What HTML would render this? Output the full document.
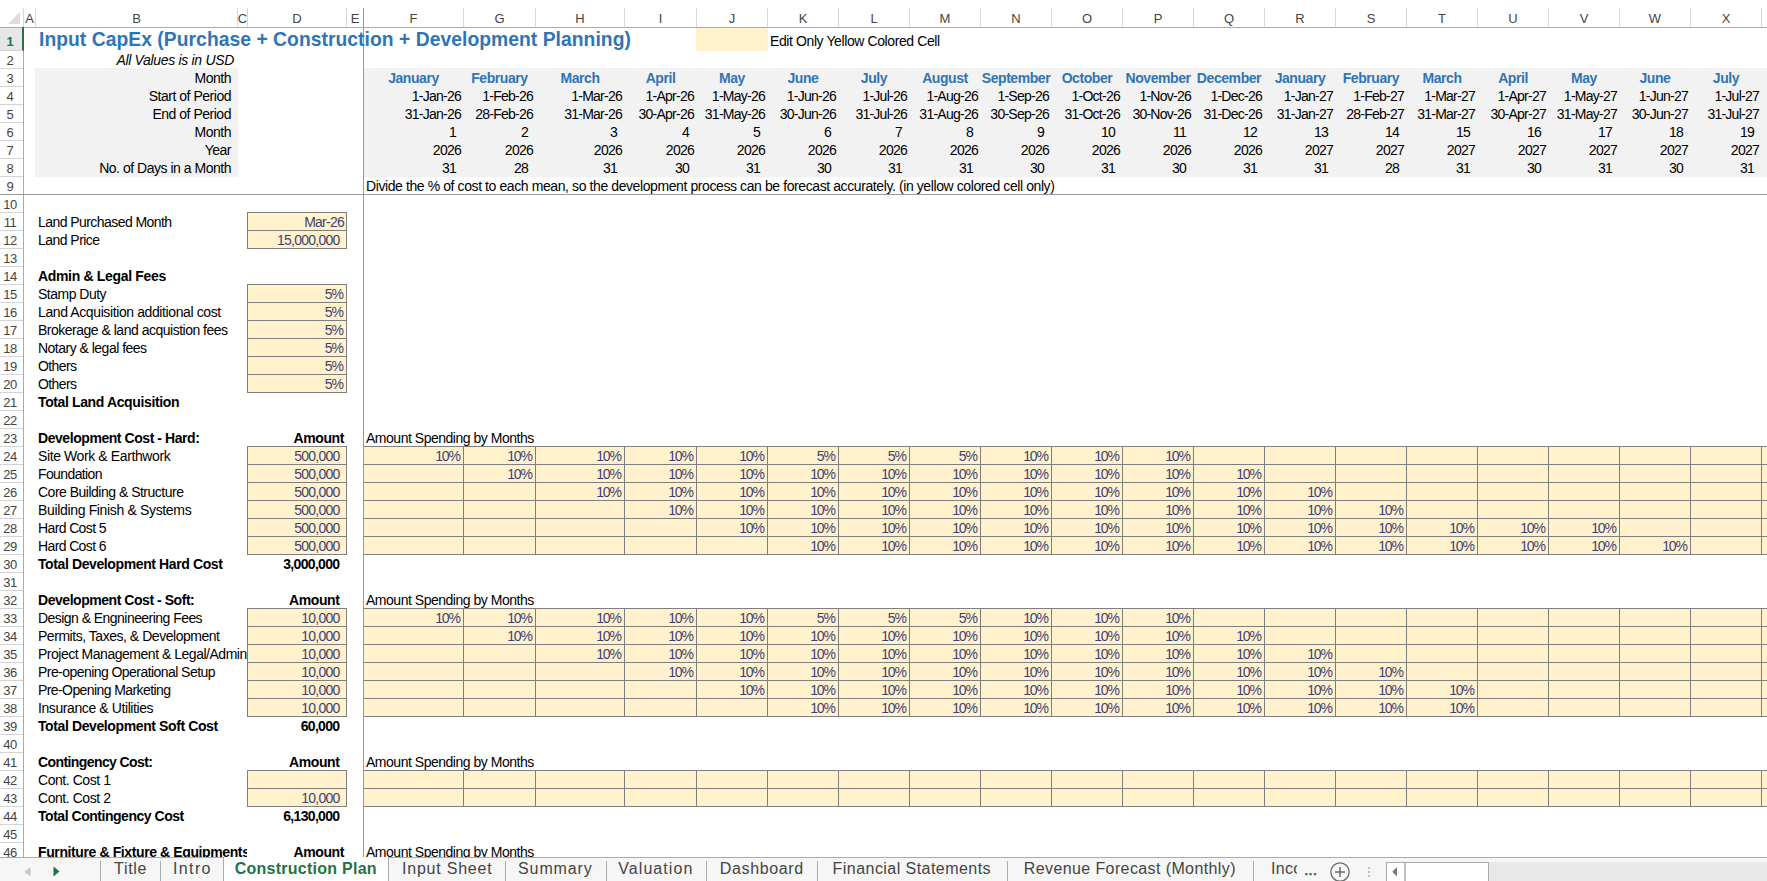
<!DOCTYPE html><html><head><meta charset="utf-8"><title>Construction Plan</title>
<style>
html,body{margin:0;padding:0;background:#fff;}
body{width:1767px;height:881px;overflow:hidden;position:relative;font-family:"Liberation Sans",sans-serif;font-size:14px;color:#000;}
.t{position:absolute;white-space:nowrap;letter-spacing:-0.480px;}
.n{letter-spacing:-0.750px;}
.p{letter-spacing:-1.050px;}
.b{font-weight:bold;letter-spacing:-0.390px;}
.i{font-style:italic;letter-spacing:-0.320px;}
.blue{color:#2e75b6;font-weight:bold;letter-spacing:-0.430px;}
.inp{color:#3f3f76;}
.ch{color:#444;font-size:13px;letter-spacing:0;}
.rh{color:#444;font-size:13px;letter-spacing:-0.45px;}
</style></head><body>
<div style="position:absolute;left:35px;top:68px;width:203px;height:109px;background:#f2f2f2;"></div>
<div style="position:absolute;left:364px;top:68px;width:1403px;height:109px;background:#f2f2f2;"></div>
<div style="position:absolute;left:696px;top:28px;width:72px;height:23px;background:#fff2cc;"></div>
<div style="position:absolute;left:247px;top:212px;width:100px;height:37px;background:#fff2cc;"></div>
<div style="position:absolute;left:247px;top:212px;width:100px;height:1px;background:#7f7f7f;"></div>
<div style="position:absolute;left:247px;top:230px;width:100px;height:1px;background:#7f7f7f;"></div>
<div style="position:absolute;left:247px;top:248px;width:100px;height:1px;background:#7f7f7f;"></div>
<div style="position:absolute;left:247px;top:212px;width:1px;height:37px;background:#7f7f7f;"></div>
<div style="position:absolute;left:346px;top:212px;width:1px;height:37px;background:#7f7f7f;"></div>
<div style="position:absolute;left:247px;top:284px;width:100px;height:109px;background:#fff2cc;"></div>
<div style="position:absolute;left:247px;top:284px;width:100px;height:1px;background:#7f7f7f;"></div>
<div style="position:absolute;left:247px;top:302px;width:100px;height:1px;background:#7f7f7f;"></div>
<div style="position:absolute;left:247px;top:320px;width:100px;height:1px;background:#7f7f7f;"></div>
<div style="position:absolute;left:247px;top:338px;width:100px;height:1px;background:#7f7f7f;"></div>
<div style="position:absolute;left:247px;top:356px;width:100px;height:1px;background:#7f7f7f;"></div>
<div style="position:absolute;left:247px;top:374px;width:100px;height:1px;background:#7f7f7f;"></div>
<div style="position:absolute;left:247px;top:392px;width:100px;height:1px;background:#7f7f7f;"></div>
<div style="position:absolute;left:247px;top:284px;width:1px;height:109px;background:#7f7f7f;"></div>
<div style="position:absolute;left:346px;top:284px;width:1px;height:109px;background:#7f7f7f;"></div>
<div style="position:absolute;left:247px;top:446px;width:100px;height:109px;background:#fff2cc;"></div>
<div style="position:absolute;left:247px;top:446px;width:100px;height:1px;background:#7f7f7f;"></div>
<div style="position:absolute;left:247px;top:464px;width:100px;height:1px;background:#7f7f7f;"></div>
<div style="position:absolute;left:247px;top:482px;width:100px;height:1px;background:#7f7f7f;"></div>
<div style="position:absolute;left:247px;top:500px;width:100px;height:1px;background:#7f7f7f;"></div>
<div style="position:absolute;left:247px;top:518px;width:100px;height:1px;background:#7f7f7f;"></div>
<div style="position:absolute;left:247px;top:536px;width:100px;height:1px;background:#7f7f7f;"></div>
<div style="position:absolute;left:247px;top:554px;width:100px;height:1px;background:#7f7f7f;"></div>
<div style="position:absolute;left:247px;top:446px;width:1px;height:109px;background:#7f7f7f;"></div>
<div style="position:absolute;left:346px;top:446px;width:1px;height:109px;background:#7f7f7f;"></div>
<div style="position:absolute;left:247px;top:608px;width:100px;height:109px;background:#fff2cc;"></div>
<div style="position:absolute;left:247px;top:608px;width:100px;height:1px;background:#7f7f7f;"></div>
<div style="position:absolute;left:247px;top:626px;width:100px;height:1px;background:#7f7f7f;"></div>
<div style="position:absolute;left:247px;top:644px;width:100px;height:1px;background:#7f7f7f;"></div>
<div style="position:absolute;left:247px;top:662px;width:100px;height:1px;background:#7f7f7f;"></div>
<div style="position:absolute;left:247px;top:680px;width:100px;height:1px;background:#7f7f7f;"></div>
<div style="position:absolute;left:247px;top:698px;width:100px;height:1px;background:#7f7f7f;"></div>
<div style="position:absolute;left:247px;top:716px;width:100px;height:1px;background:#7f7f7f;"></div>
<div style="position:absolute;left:247px;top:608px;width:1px;height:109px;background:#7f7f7f;"></div>
<div style="position:absolute;left:346px;top:608px;width:1px;height:109px;background:#7f7f7f;"></div>
<div style="position:absolute;left:247px;top:770px;width:100px;height:37px;background:#fff2cc;"></div>
<div style="position:absolute;left:247px;top:770px;width:100px;height:1px;background:#7f7f7f;"></div>
<div style="position:absolute;left:247px;top:788px;width:100px;height:1px;background:#7f7f7f;"></div>
<div style="position:absolute;left:247px;top:806px;width:100px;height:1px;background:#7f7f7f;"></div>
<div style="position:absolute;left:247px;top:770px;width:1px;height:37px;background:#7f7f7f;"></div>
<div style="position:absolute;left:346px;top:770px;width:1px;height:37px;background:#7f7f7f;"></div>
<div style="position:absolute;left:363px;top:446px;width:1404px;height:109px;background:#fff2cc;"></div>
<div style="position:absolute;left:363px;top:446px;width:1404px;height:1px;background:#7f7f7f;"></div>
<div style="position:absolute;left:363px;top:464px;width:1404px;height:1px;background:#7f7f7f;"></div>
<div style="position:absolute;left:363px;top:482px;width:1404px;height:1px;background:#7f7f7f;"></div>
<div style="position:absolute;left:363px;top:500px;width:1404px;height:1px;background:#7f7f7f;"></div>
<div style="position:absolute;left:363px;top:518px;width:1404px;height:1px;background:#7f7f7f;"></div>
<div style="position:absolute;left:363px;top:536px;width:1404px;height:1px;background:#7f7f7f;"></div>
<div style="position:absolute;left:363px;top:554px;width:1404px;height:1px;background:#7f7f7f;"></div>
<div style="position:absolute;left:463px;top:446px;width:1px;height:109px;background:#7f7f7f;"></div>
<div style="position:absolute;left:535px;top:446px;width:1px;height:109px;background:#7f7f7f;"></div>
<div style="position:absolute;left:624px;top:446px;width:1px;height:109px;background:#7f7f7f;"></div>
<div style="position:absolute;left:696px;top:446px;width:1px;height:109px;background:#7f7f7f;"></div>
<div style="position:absolute;left:767px;top:446px;width:1px;height:109px;background:#7f7f7f;"></div>
<div style="position:absolute;left:838px;top:446px;width:1px;height:109px;background:#7f7f7f;"></div>
<div style="position:absolute;left:909px;top:446px;width:1px;height:109px;background:#7f7f7f;"></div>
<div style="position:absolute;left:980px;top:446px;width:1px;height:109px;background:#7f7f7f;"></div>
<div style="position:absolute;left:1051px;top:446px;width:1px;height:109px;background:#7f7f7f;"></div>
<div style="position:absolute;left:1122px;top:446px;width:1px;height:109px;background:#7f7f7f;"></div>
<div style="position:absolute;left:1193px;top:446px;width:1px;height:109px;background:#7f7f7f;"></div>
<div style="position:absolute;left:1264px;top:446px;width:1px;height:109px;background:#7f7f7f;"></div>
<div style="position:absolute;left:1335px;top:446px;width:1px;height:109px;background:#7f7f7f;"></div>
<div style="position:absolute;left:1406px;top:446px;width:1px;height:109px;background:#7f7f7f;"></div>
<div style="position:absolute;left:1477px;top:446px;width:1px;height:109px;background:#7f7f7f;"></div>
<div style="position:absolute;left:1548px;top:446px;width:1px;height:109px;background:#7f7f7f;"></div>
<div style="position:absolute;left:1619px;top:446px;width:1px;height:109px;background:#7f7f7f;"></div>
<div style="position:absolute;left:1690px;top:446px;width:1px;height:109px;background:#7f7f7f;"></div>
<div style="position:absolute;left:1761px;top:446px;width:1px;height:109px;background:#7f7f7f;"></div>
<div style="position:absolute;left:363px;top:608px;width:1404px;height:109px;background:#fff2cc;"></div>
<div style="position:absolute;left:363px;top:608px;width:1404px;height:1px;background:#7f7f7f;"></div>
<div style="position:absolute;left:363px;top:626px;width:1404px;height:1px;background:#7f7f7f;"></div>
<div style="position:absolute;left:363px;top:644px;width:1404px;height:1px;background:#7f7f7f;"></div>
<div style="position:absolute;left:363px;top:662px;width:1404px;height:1px;background:#7f7f7f;"></div>
<div style="position:absolute;left:363px;top:680px;width:1404px;height:1px;background:#7f7f7f;"></div>
<div style="position:absolute;left:363px;top:698px;width:1404px;height:1px;background:#7f7f7f;"></div>
<div style="position:absolute;left:363px;top:716px;width:1404px;height:1px;background:#7f7f7f;"></div>
<div style="position:absolute;left:463px;top:608px;width:1px;height:109px;background:#7f7f7f;"></div>
<div style="position:absolute;left:535px;top:608px;width:1px;height:109px;background:#7f7f7f;"></div>
<div style="position:absolute;left:624px;top:608px;width:1px;height:109px;background:#7f7f7f;"></div>
<div style="position:absolute;left:696px;top:608px;width:1px;height:109px;background:#7f7f7f;"></div>
<div style="position:absolute;left:767px;top:608px;width:1px;height:109px;background:#7f7f7f;"></div>
<div style="position:absolute;left:838px;top:608px;width:1px;height:109px;background:#7f7f7f;"></div>
<div style="position:absolute;left:909px;top:608px;width:1px;height:109px;background:#7f7f7f;"></div>
<div style="position:absolute;left:980px;top:608px;width:1px;height:109px;background:#7f7f7f;"></div>
<div style="position:absolute;left:1051px;top:608px;width:1px;height:109px;background:#7f7f7f;"></div>
<div style="position:absolute;left:1122px;top:608px;width:1px;height:109px;background:#7f7f7f;"></div>
<div style="position:absolute;left:1193px;top:608px;width:1px;height:109px;background:#7f7f7f;"></div>
<div style="position:absolute;left:1264px;top:608px;width:1px;height:109px;background:#7f7f7f;"></div>
<div style="position:absolute;left:1335px;top:608px;width:1px;height:109px;background:#7f7f7f;"></div>
<div style="position:absolute;left:1406px;top:608px;width:1px;height:109px;background:#7f7f7f;"></div>
<div style="position:absolute;left:1477px;top:608px;width:1px;height:109px;background:#7f7f7f;"></div>
<div style="position:absolute;left:1548px;top:608px;width:1px;height:109px;background:#7f7f7f;"></div>
<div style="position:absolute;left:1619px;top:608px;width:1px;height:109px;background:#7f7f7f;"></div>
<div style="position:absolute;left:1690px;top:608px;width:1px;height:109px;background:#7f7f7f;"></div>
<div style="position:absolute;left:1761px;top:608px;width:1px;height:109px;background:#7f7f7f;"></div>
<div style="position:absolute;left:363px;top:770px;width:1404px;height:37px;background:#fff2cc;"></div>
<div style="position:absolute;left:363px;top:770px;width:1404px;height:1px;background:#7f7f7f;"></div>
<div style="position:absolute;left:363px;top:788px;width:1404px;height:1px;background:#7f7f7f;"></div>
<div style="position:absolute;left:363px;top:806px;width:1404px;height:1px;background:#7f7f7f;"></div>
<div style="position:absolute;left:463px;top:770px;width:1px;height:37px;background:#7f7f7f;"></div>
<div style="position:absolute;left:535px;top:770px;width:1px;height:37px;background:#7f7f7f;"></div>
<div style="position:absolute;left:624px;top:770px;width:1px;height:37px;background:#7f7f7f;"></div>
<div style="position:absolute;left:696px;top:770px;width:1px;height:37px;background:#7f7f7f;"></div>
<div style="position:absolute;left:767px;top:770px;width:1px;height:37px;background:#7f7f7f;"></div>
<div style="position:absolute;left:838px;top:770px;width:1px;height:37px;background:#7f7f7f;"></div>
<div style="position:absolute;left:909px;top:770px;width:1px;height:37px;background:#7f7f7f;"></div>
<div style="position:absolute;left:980px;top:770px;width:1px;height:37px;background:#7f7f7f;"></div>
<div style="position:absolute;left:1051px;top:770px;width:1px;height:37px;background:#7f7f7f;"></div>
<div style="position:absolute;left:1122px;top:770px;width:1px;height:37px;background:#7f7f7f;"></div>
<div style="position:absolute;left:1193px;top:770px;width:1px;height:37px;background:#7f7f7f;"></div>
<div style="position:absolute;left:1264px;top:770px;width:1px;height:37px;background:#7f7f7f;"></div>
<div style="position:absolute;left:1335px;top:770px;width:1px;height:37px;background:#7f7f7f;"></div>
<div style="position:absolute;left:1406px;top:770px;width:1px;height:37px;background:#7f7f7f;"></div>
<div style="position:absolute;left:1477px;top:770px;width:1px;height:37px;background:#7f7f7f;"></div>
<div style="position:absolute;left:1548px;top:770px;width:1px;height:37px;background:#7f7f7f;"></div>
<div style="position:absolute;left:1619px;top:770px;width:1px;height:37px;background:#7f7f7f;"></div>
<div style="position:absolute;left:1690px;top:770px;width:1px;height:37px;background:#7f7f7f;"></div>
<div style="position:absolute;left:1761px;top:770px;width:1px;height:37px;background:#7f7f7f;"></div>
<div style="position:absolute;left:0px;top:27px;width:1767px;height:1px;background:#ababab;"></div>
<div style="position:absolute;left:35px;top:8px;width:1px;height:19px;background:#d8d8d8;"></div>
<div style="position:absolute;left:237px;top:8px;width:1px;height:19px;background:#d8d8d8;"></div>
<div style="position:absolute;left:247px;top:8px;width:1px;height:19px;background:#d8d8d8;"></div>
<div style="position:absolute;left:346px;top:8px;width:1px;height:19px;background:#d8d8d8;"></div>
<div style="position:absolute;left:463px;top:8px;width:1px;height:19px;background:#d8d8d8;"></div>
<div style="position:absolute;left:535px;top:8px;width:1px;height:19px;background:#d8d8d8;"></div>
<div style="position:absolute;left:624px;top:8px;width:1px;height:19px;background:#d8d8d8;"></div>
<div style="position:absolute;left:696px;top:8px;width:1px;height:19px;background:#d8d8d8;"></div>
<div style="position:absolute;left:767px;top:8px;width:1px;height:19px;background:#d8d8d8;"></div>
<div style="position:absolute;left:838px;top:8px;width:1px;height:19px;background:#d8d8d8;"></div>
<div style="position:absolute;left:909px;top:8px;width:1px;height:19px;background:#d8d8d8;"></div>
<div style="position:absolute;left:980px;top:8px;width:1px;height:19px;background:#d8d8d8;"></div>
<div style="position:absolute;left:1051px;top:8px;width:1px;height:19px;background:#d8d8d8;"></div>
<div style="position:absolute;left:1122px;top:8px;width:1px;height:19px;background:#d8d8d8;"></div>
<div style="position:absolute;left:1193px;top:8px;width:1px;height:19px;background:#d8d8d8;"></div>
<div style="position:absolute;left:1264px;top:8px;width:1px;height:19px;background:#d8d8d8;"></div>
<div style="position:absolute;left:1335px;top:8px;width:1px;height:19px;background:#d8d8d8;"></div>
<div style="position:absolute;left:1406px;top:8px;width:1px;height:19px;background:#d8d8d8;"></div>
<div style="position:absolute;left:1477px;top:8px;width:1px;height:19px;background:#d8d8d8;"></div>
<div style="position:absolute;left:1548px;top:8px;width:1px;height:19px;background:#d8d8d8;"></div>
<div style="position:absolute;left:1619px;top:8px;width:1px;height:19px;background:#d8d8d8;"></div>
<div style="position:absolute;left:1690px;top:8px;width:1px;height:19px;background:#d8d8d8;"></div>
<div style="position:absolute;left:1761px;top:8px;width:1px;height:19px;background:#d8d8d8;"></div>
<div style="position:absolute;left:23px;top:8px;width:1px;height:19px;background:#d8d8d8;"></div>
<div class="t ch" style="left:-20.5px;width:100px;text-align:center;top:10px;height:17px;line-height:17px;">A</div>
<div class="t ch" style="left:86.5px;width:100px;text-align:center;top:10px;height:17px;line-height:17px;">B</div>
<div class="t ch" style="left:192.5px;width:100px;text-align:center;top:10px;height:17px;line-height:17px;">C</div>
<div class="t ch" style="left:247.0px;width:100px;text-align:center;top:10px;height:17px;line-height:17px;">D</div>
<div class="t ch" style="left:305.0px;width:100px;text-align:center;top:10px;height:17px;line-height:17px;">E</div>
<div class="t ch" style="left:363.5px;width:100px;text-align:center;top:10px;height:17px;line-height:17px;">F</div>
<div class="t ch" style="left:449.5px;width:100px;text-align:center;top:10px;height:17px;line-height:17px;">G</div>
<div class="t ch" style="left:530.0px;width:100px;text-align:center;top:10px;height:17px;line-height:17px;">H</div>
<div class="t ch" style="left:610.5px;width:100px;text-align:center;top:10px;height:17px;line-height:17px;">I</div>
<div class="t ch" style="left:682.0px;width:100px;text-align:center;top:10px;height:17px;line-height:17px;">J</div>
<div class="t ch" style="left:753.0px;width:100px;text-align:center;top:10px;height:17px;line-height:17px;">K</div>
<div class="t ch" style="left:824.0px;width:100px;text-align:center;top:10px;height:17px;line-height:17px;">L</div>
<div class="t ch" style="left:895.0px;width:100px;text-align:center;top:10px;height:17px;line-height:17px;">M</div>
<div class="t ch" style="left:966.0px;width:100px;text-align:center;top:10px;height:17px;line-height:17px;">N</div>
<div class="t ch" style="left:1037.0px;width:100px;text-align:center;top:10px;height:17px;line-height:17px;">O</div>
<div class="t ch" style="left:1108.0px;width:100px;text-align:center;top:10px;height:17px;line-height:17px;">P</div>
<div class="t ch" style="left:1179.0px;width:100px;text-align:center;top:10px;height:17px;line-height:17px;">Q</div>
<div class="t ch" style="left:1250.0px;width:100px;text-align:center;top:10px;height:17px;line-height:17px;">R</div>
<div class="t ch" style="left:1321.0px;width:100px;text-align:center;top:10px;height:17px;line-height:17px;">S</div>
<div class="t ch" style="left:1392.0px;width:100px;text-align:center;top:10px;height:17px;line-height:17px;">T</div>
<div class="t ch" style="left:1463.0px;width:100px;text-align:center;top:10px;height:17px;line-height:17px;">U</div>
<div class="t ch" style="left:1534.0px;width:100px;text-align:center;top:10px;height:17px;line-height:17px;">V</div>
<div class="t ch" style="left:1605.0px;width:100px;text-align:center;top:10px;height:17px;line-height:17px;">W</div>
<div class="t ch" style="left:1676.0px;width:100px;text-align:center;top:10px;height:17px;line-height:17px;">X</div>
<svg style="position:absolute;left:0;top:0" width="24" height="28"><polygon points="20,12 20,24 8,24" fill="#dcdcdc"/></svg>
<div style="position:absolute;left:23px;top:27px;width:1px;height:830px;background:#ababab;"></div>
<div style="position:absolute;left:0px;top:28px;width:22px;height:22px;background:#e6e6e6;"></div>
<div style="position:absolute;left:22px;top:27px;width:2px;height:24px;background:#217346;"></div>
<div style="position:absolute;left:0px;top:50px;width:23px;height:1px;background:#d4d4d4;"></div>
<div class="t rh" style="left:-1px;width:22px;text-align:center;top:29px;height:23px;line-height:23px;color:#217346;font-weight:bold;margin-top:1px;">1</div>
<div style="position:absolute;left:0px;top:68px;width:23px;height:1px;background:#d4d4d4;"></div>
<div class="t rh" style="left:-1px;width:22px;text-align:center;top:52px;height:18px;line-height:18px;">2</div>
<div style="position:absolute;left:0px;top:86px;width:23px;height:1px;background:#d4d4d4;"></div>
<div class="t rh" style="left:-1px;width:22px;text-align:center;top:70px;height:18px;line-height:18px;">3</div>
<div style="position:absolute;left:0px;top:104px;width:23px;height:1px;background:#d4d4d4;"></div>
<div class="t rh" style="left:-1px;width:22px;text-align:center;top:88px;height:18px;line-height:18px;">4</div>
<div style="position:absolute;left:0px;top:122px;width:23px;height:1px;background:#d4d4d4;"></div>
<div class="t rh" style="left:-1px;width:22px;text-align:center;top:106px;height:18px;line-height:18px;">5</div>
<div style="position:absolute;left:0px;top:140px;width:23px;height:1px;background:#d4d4d4;"></div>
<div class="t rh" style="left:-1px;width:22px;text-align:center;top:124px;height:18px;line-height:18px;">6</div>
<div style="position:absolute;left:0px;top:158px;width:23px;height:1px;background:#d4d4d4;"></div>
<div class="t rh" style="left:-1px;width:22px;text-align:center;top:142px;height:18px;line-height:18px;">7</div>
<div style="position:absolute;left:0px;top:176px;width:23px;height:1px;background:#d4d4d4;"></div>
<div class="t rh" style="left:-1px;width:22px;text-align:center;top:160px;height:18px;line-height:18px;">8</div>
<div style="position:absolute;left:0px;top:194px;width:23px;height:1px;background:#d4d4d4;"></div>
<div class="t rh" style="left:-1px;width:22px;text-align:center;top:178px;height:18px;line-height:18px;">9</div>
<div style="position:absolute;left:0px;top:212px;width:23px;height:1px;background:#d4d4d4;"></div>
<div class="t rh" style="left:-1px;width:22px;text-align:center;top:196px;height:18px;line-height:18px;">10</div>
<div style="position:absolute;left:0px;top:230px;width:23px;height:1px;background:#d4d4d4;"></div>
<div class="t rh" style="left:-1px;width:22px;text-align:center;top:214px;height:18px;line-height:18px;">11</div>
<div style="position:absolute;left:0px;top:248px;width:23px;height:1px;background:#d4d4d4;"></div>
<div class="t rh" style="left:-1px;width:22px;text-align:center;top:232px;height:18px;line-height:18px;">12</div>
<div style="position:absolute;left:0px;top:266px;width:23px;height:1px;background:#d4d4d4;"></div>
<div class="t rh" style="left:-1px;width:22px;text-align:center;top:250px;height:18px;line-height:18px;">13</div>
<div style="position:absolute;left:0px;top:284px;width:23px;height:1px;background:#d4d4d4;"></div>
<div class="t rh" style="left:-1px;width:22px;text-align:center;top:268px;height:18px;line-height:18px;">14</div>
<div style="position:absolute;left:0px;top:302px;width:23px;height:1px;background:#d4d4d4;"></div>
<div class="t rh" style="left:-1px;width:22px;text-align:center;top:286px;height:18px;line-height:18px;">15</div>
<div style="position:absolute;left:0px;top:320px;width:23px;height:1px;background:#d4d4d4;"></div>
<div class="t rh" style="left:-1px;width:22px;text-align:center;top:304px;height:18px;line-height:18px;">16</div>
<div style="position:absolute;left:0px;top:338px;width:23px;height:1px;background:#d4d4d4;"></div>
<div class="t rh" style="left:-1px;width:22px;text-align:center;top:322px;height:18px;line-height:18px;">17</div>
<div style="position:absolute;left:0px;top:356px;width:23px;height:1px;background:#d4d4d4;"></div>
<div class="t rh" style="left:-1px;width:22px;text-align:center;top:340px;height:18px;line-height:18px;">18</div>
<div style="position:absolute;left:0px;top:374px;width:23px;height:1px;background:#d4d4d4;"></div>
<div class="t rh" style="left:-1px;width:22px;text-align:center;top:358px;height:18px;line-height:18px;">19</div>
<div style="position:absolute;left:0px;top:392px;width:23px;height:1px;background:#d4d4d4;"></div>
<div class="t rh" style="left:-1px;width:22px;text-align:center;top:376px;height:18px;line-height:18px;">20</div>
<div style="position:absolute;left:0px;top:410px;width:23px;height:1px;background:#d4d4d4;"></div>
<div class="t rh" style="left:-1px;width:22px;text-align:center;top:394px;height:18px;line-height:18px;">21</div>
<div style="position:absolute;left:0px;top:428px;width:23px;height:1px;background:#d4d4d4;"></div>
<div class="t rh" style="left:-1px;width:22px;text-align:center;top:412px;height:18px;line-height:18px;">22</div>
<div style="position:absolute;left:0px;top:446px;width:23px;height:1px;background:#d4d4d4;"></div>
<div class="t rh" style="left:-1px;width:22px;text-align:center;top:430px;height:18px;line-height:18px;">23</div>
<div style="position:absolute;left:0px;top:464px;width:23px;height:1px;background:#d4d4d4;"></div>
<div class="t rh" style="left:-1px;width:22px;text-align:center;top:448px;height:18px;line-height:18px;">24</div>
<div style="position:absolute;left:0px;top:482px;width:23px;height:1px;background:#d4d4d4;"></div>
<div class="t rh" style="left:-1px;width:22px;text-align:center;top:466px;height:18px;line-height:18px;">25</div>
<div style="position:absolute;left:0px;top:500px;width:23px;height:1px;background:#d4d4d4;"></div>
<div class="t rh" style="left:-1px;width:22px;text-align:center;top:484px;height:18px;line-height:18px;">26</div>
<div style="position:absolute;left:0px;top:518px;width:23px;height:1px;background:#d4d4d4;"></div>
<div class="t rh" style="left:-1px;width:22px;text-align:center;top:502px;height:18px;line-height:18px;">27</div>
<div style="position:absolute;left:0px;top:536px;width:23px;height:1px;background:#d4d4d4;"></div>
<div class="t rh" style="left:-1px;width:22px;text-align:center;top:520px;height:18px;line-height:18px;">28</div>
<div style="position:absolute;left:0px;top:554px;width:23px;height:1px;background:#d4d4d4;"></div>
<div class="t rh" style="left:-1px;width:22px;text-align:center;top:538px;height:18px;line-height:18px;">29</div>
<div style="position:absolute;left:0px;top:572px;width:23px;height:1px;background:#d4d4d4;"></div>
<div class="t rh" style="left:-1px;width:22px;text-align:center;top:556px;height:18px;line-height:18px;">30</div>
<div style="position:absolute;left:0px;top:590px;width:23px;height:1px;background:#d4d4d4;"></div>
<div class="t rh" style="left:-1px;width:22px;text-align:center;top:574px;height:18px;line-height:18px;">31</div>
<div style="position:absolute;left:0px;top:608px;width:23px;height:1px;background:#d4d4d4;"></div>
<div class="t rh" style="left:-1px;width:22px;text-align:center;top:592px;height:18px;line-height:18px;">32</div>
<div style="position:absolute;left:0px;top:626px;width:23px;height:1px;background:#d4d4d4;"></div>
<div class="t rh" style="left:-1px;width:22px;text-align:center;top:610px;height:18px;line-height:18px;">33</div>
<div style="position:absolute;left:0px;top:644px;width:23px;height:1px;background:#d4d4d4;"></div>
<div class="t rh" style="left:-1px;width:22px;text-align:center;top:628px;height:18px;line-height:18px;">34</div>
<div style="position:absolute;left:0px;top:662px;width:23px;height:1px;background:#d4d4d4;"></div>
<div class="t rh" style="left:-1px;width:22px;text-align:center;top:646px;height:18px;line-height:18px;">35</div>
<div style="position:absolute;left:0px;top:680px;width:23px;height:1px;background:#d4d4d4;"></div>
<div class="t rh" style="left:-1px;width:22px;text-align:center;top:664px;height:18px;line-height:18px;">36</div>
<div style="position:absolute;left:0px;top:698px;width:23px;height:1px;background:#d4d4d4;"></div>
<div class="t rh" style="left:-1px;width:22px;text-align:center;top:682px;height:18px;line-height:18px;">37</div>
<div style="position:absolute;left:0px;top:716px;width:23px;height:1px;background:#d4d4d4;"></div>
<div class="t rh" style="left:-1px;width:22px;text-align:center;top:700px;height:18px;line-height:18px;">38</div>
<div style="position:absolute;left:0px;top:734px;width:23px;height:1px;background:#d4d4d4;"></div>
<div class="t rh" style="left:-1px;width:22px;text-align:center;top:718px;height:18px;line-height:18px;">39</div>
<div style="position:absolute;left:0px;top:752px;width:23px;height:1px;background:#d4d4d4;"></div>
<div class="t rh" style="left:-1px;width:22px;text-align:center;top:736px;height:18px;line-height:18px;">40</div>
<div style="position:absolute;left:0px;top:770px;width:23px;height:1px;background:#d4d4d4;"></div>
<div class="t rh" style="left:-1px;width:22px;text-align:center;top:754px;height:18px;line-height:18px;">41</div>
<div style="position:absolute;left:0px;top:788px;width:23px;height:1px;background:#d4d4d4;"></div>
<div class="t rh" style="left:-1px;width:22px;text-align:center;top:772px;height:18px;line-height:18px;">42</div>
<div style="position:absolute;left:0px;top:806px;width:23px;height:1px;background:#d4d4d4;"></div>
<div class="t rh" style="left:-1px;width:22px;text-align:center;top:790px;height:18px;line-height:18px;">43</div>
<div style="position:absolute;left:0px;top:824px;width:23px;height:1px;background:#d4d4d4;"></div>
<div class="t rh" style="left:-1px;width:22px;text-align:center;top:808px;height:18px;line-height:18px;">44</div>
<div style="position:absolute;left:0px;top:842px;width:23px;height:1px;background:#d4d4d4;"></div>
<div class="t rh" style="left:-1px;width:22px;text-align:center;top:826px;height:18px;line-height:18px;">45</div>
<div class="t rh" style="left:-1px;width:22px;text-align:center;top:844px;height:18px;line-height:18px;">46</div>
<div style="position:absolute;left:363px;top:8px;width:1px;height:849px;background:#9b9b9b;"></div>
<div style="position:absolute;left:0px;top:194px;width:1767px;height:1px;background:#9b9b9b;"></div>
<div class="t blue" style="top:28px;height:23px;line-height:23px;left:39px;font-size:19.3px;letter-spacing:0.045px;">Input CapEx (Purchase + Construction + Development Planning)</div>
<div class="t " style="top:30px;height:23px;line-height:23px;left:770px;letter-spacing:-0.40px;">Edit Only Yellow Colored Cell</div>
<div class="t i" style="top:51px;height:18px;line-height:18px;right:1533px;">All Values is in USD</div>
<div class="t " style="top:69px;height:18px;line-height:18px;right:1536px;">Month</div>
<div class="t " style="top:87px;height:18px;line-height:18px;right:1536px;">Start of Period</div>
<div class="t " style="top:105px;height:18px;line-height:18px;right:1536px;">End of Period</div>
<div class="t " style="top:123px;height:18px;line-height:18px;right:1536px;">Month</div>
<div class="t " style="top:141px;height:18px;line-height:18px;right:1536px;">Year</div>
<div class="t " style="top:159px;height:18px;line-height:18px;right:1536px;">No. of Days in a Month</div>
<div class="t blue" style="top:69px;height:18px;line-height:18px;left:263.5px;width:300px;text-align:center;">January</div>
<div class="t n" style="top:87px;height:18px;line-height:18px;right:1306px;">1-Jan-26</div>
<div class="t n" style="top:105px;height:18px;line-height:18px;right:1306px;">31-Jan-26</div>
<div class="t n" style="top:123px;height:18px;line-height:18px;right:1311px;">1</div>
<div class="t n" style="top:141px;height:18px;line-height:18px;right:1306px;">2026</div>
<div class="t n" style="top:159px;height:18px;line-height:18px;right:1311px;">31</div>
<div class="t blue" style="top:69px;height:18px;line-height:18px;left:349.5px;width:300px;text-align:center;">February</div>
<div class="t n" style="top:87px;height:18px;line-height:18px;right:1234px;">1-Feb-26</div>
<div class="t n" style="top:105px;height:18px;line-height:18px;right:1234px;">28-Feb-26</div>
<div class="t n" style="top:123px;height:18px;line-height:18px;right:1239px;">2</div>
<div class="t n" style="top:141px;height:18px;line-height:18px;right:1234px;">2026</div>
<div class="t n" style="top:159px;height:18px;line-height:18px;right:1239px;">28</div>
<div class="t blue" style="top:69px;height:18px;line-height:18px;left:430.0px;width:300px;text-align:center;">March</div>
<div class="t n" style="top:87px;height:18px;line-height:18px;right:1145px;">1-Mar-26</div>
<div class="t n" style="top:105px;height:18px;line-height:18px;right:1145px;">31-Mar-26</div>
<div class="t n" style="top:123px;height:18px;line-height:18px;right:1150px;">3</div>
<div class="t n" style="top:141px;height:18px;line-height:18px;right:1145px;">2026</div>
<div class="t n" style="top:159px;height:18px;line-height:18px;right:1150px;">31</div>
<div class="t blue" style="top:69px;height:18px;line-height:18px;left:510.5px;width:300px;text-align:center;">April</div>
<div class="t n" style="top:87px;height:18px;line-height:18px;right:1073px;">1-Apr-26</div>
<div class="t n" style="top:105px;height:18px;line-height:18px;right:1073px;">30-Apr-26</div>
<div class="t n" style="top:123px;height:18px;line-height:18px;right:1078px;">4</div>
<div class="t n" style="top:141px;height:18px;line-height:18px;right:1073px;">2026</div>
<div class="t n" style="top:159px;height:18px;line-height:18px;right:1078px;">30</div>
<div class="t blue" style="top:69px;height:18px;line-height:18px;left:582.0px;width:300px;text-align:center;">May</div>
<div class="t n" style="top:87px;height:18px;line-height:18px;right:1002px;">1-May-26</div>
<div class="t n" style="top:105px;height:18px;line-height:18px;right:1002px;">31-May-26</div>
<div class="t n" style="top:123px;height:18px;line-height:18px;right:1007px;">5</div>
<div class="t n" style="top:141px;height:18px;line-height:18px;right:1002px;">2026</div>
<div class="t n" style="top:159px;height:18px;line-height:18px;right:1007px;">31</div>
<div class="t blue" style="top:69px;height:18px;line-height:18px;left:653.0px;width:300px;text-align:center;">June</div>
<div class="t n" style="top:87px;height:18px;line-height:18px;right:931px;">1-Jun-26</div>
<div class="t n" style="top:105px;height:18px;line-height:18px;right:931px;">30-Jun-26</div>
<div class="t n" style="top:123px;height:18px;line-height:18px;right:936px;">6</div>
<div class="t n" style="top:141px;height:18px;line-height:18px;right:931px;">2026</div>
<div class="t n" style="top:159px;height:18px;line-height:18px;right:936px;">30</div>
<div class="t blue" style="top:69px;height:18px;line-height:18px;left:724.0px;width:300px;text-align:center;">July</div>
<div class="t n" style="top:87px;height:18px;line-height:18px;right:860px;">1-Jul-26</div>
<div class="t n" style="top:105px;height:18px;line-height:18px;right:860px;">31-Jul-26</div>
<div class="t n" style="top:123px;height:18px;line-height:18px;right:865px;">7</div>
<div class="t n" style="top:141px;height:18px;line-height:18px;right:860px;">2026</div>
<div class="t n" style="top:159px;height:18px;line-height:18px;right:865px;">31</div>
<div class="t blue" style="top:69px;height:18px;line-height:18px;left:795.0px;width:300px;text-align:center;">August</div>
<div class="t n" style="top:87px;height:18px;line-height:18px;right:789px;">1-Aug-26</div>
<div class="t n" style="top:105px;height:18px;line-height:18px;right:789px;">31-Aug-26</div>
<div class="t n" style="top:123px;height:18px;line-height:18px;right:794px;">8</div>
<div class="t n" style="top:141px;height:18px;line-height:18px;right:789px;">2026</div>
<div class="t n" style="top:159px;height:18px;line-height:18px;right:794px;">31</div>
<div class="t blue" style="top:69px;height:18px;line-height:18px;left:866.0px;width:300px;text-align:center;">September</div>
<div class="t n" style="top:87px;height:18px;line-height:18px;right:718px;">1-Sep-26</div>
<div class="t n" style="top:105px;height:18px;line-height:18px;right:718px;">30-Sep-26</div>
<div class="t n" style="top:123px;height:18px;line-height:18px;right:723px;">9</div>
<div class="t n" style="top:141px;height:18px;line-height:18px;right:718px;">2026</div>
<div class="t n" style="top:159px;height:18px;line-height:18px;right:723px;">30</div>
<div class="t blue" style="top:69px;height:18px;line-height:18px;left:937.0px;width:300px;text-align:center;">October</div>
<div class="t n" style="top:87px;height:18px;line-height:18px;right:647px;">1-Oct-26</div>
<div class="t n" style="top:105px;height:18px;line-height:18px;right:647px;">31-Oct-26</div>
<div class="t n" style="top:123px;height:18px;line-height:18px;right:652px;">10</div>
<div class="t n" style="top:141px;height:18px;line-height:18px;right:647px;">2026</div>
<div class="t n" style="top:159px;height:18px;line-height:18px;right:652px;">31</div>
<div class="t blue" style="top:69px;height:18px;line-height:18px;left:1008.0px;width:300px;text-align:center;">November</div>
<div class="t n" style="top:87px;height:18px;line-height:18px;right:576px;">1-Nov-26</div>
<div class="t n" style="top:105px;height:18px;line-height:18px;right:576px;">30-Nov-26</div>
<div class="t n" style="top:123px;height:18px;line-height:18px;right:581px;">11</div>
<div class="t n" style="top:141px;height:18px;line-height:18px;right:576px;">2026</div>
<div class="t n" style="top:159px;height:18px;line-height:18px;right:581px;">30</div>
<div class="t blue" style="top:69px;height:18px;line-height:18px;left:1079.0px;width:300px;text-align:center;">December</div>
<div class="t n" style="top:87px;height:18px;line-height:18px;right:505px;">1-Dec-26</div>
<div class="t n" style="top:105px;height:18px;line-height:18px;right:505px;">31-Dec-26</div>
<div class="t n" style="top:123px;height:18px;line-height:18px;right:510px;">12</div>
<div class="t n" style="top:141px;height:18px;line-height:18px;right:505px;">2026</div>
<div class="t n" style="top:159px;height:18px;line-height:18px;right:510px;">31</div>
<div class="t blue" style="top:69px;height:18px;line-height:18px;left:1150.0px;width:300px;text-align:center;">January</div>
<div class="t n" style="top:87px;height:18px;line-height:18px;right:434px;">1-Jan-27</div>
<div class="t n" style="top:105px;height:18px;line-height:18px;right:434px;">31-Jan-27</div>
<div class="t n" style="top:123px;height:18px;line-height:18px;right:439px;">13</div>
<div class="t n" style="top:141px;height:18px;line-height:18px;right:434px;">2027</div>
<div class="t n" style="top:159px;height:18px;line-height:18px;right:439px;">31</div>
<div class="t blue" style="top:69px;height:18px;line-height:18px;left:1221.0px;width:300px;text-align:center;">February</div>
<div class="t n" style="top:87px;height:18px;line-height:18px;right:363px;">1-Feb-27</div>
<div class="t n" style="top:105px;height:18px;line-height:18px;right:363px;">28-Feb-27</div>
<div class="t n" style="top:123px;height:18px;line-height:18px;right:368px;">14</div>
<div class="t n" style="top:141px;height:18px;line-height:18px;right:363px;">2027</div>
<div class="t n" style="top:159px;height:18px;line-height:18px;right:368px;">28</div>
<div class="t blue" style="top:69px;height:18px;line-height:18px;left:1292.0px;width:300px;text-align:center;">March</div>
<div class="t n" style="top:87px;height:18px;line-height:18px;right:292px;">1-Mar-27</div>
<div class="t n" style="top:105px;height:18px;line-height:18px;right:292px;">31-Mar-27</div>
<div class="t n" style="top:123px;height:18px;line-height:18px;right:297px;">15</div>
<div class="t n" style="top:141px;height:18px;line-height:18px;right:292px;">2027</div>
<div class="t n" style="top:159px;height:18px;line-height:18px;right:297px;">31</div>
<div class="t blue" style="top:69px;height:18px;line-height:18px;left:1363.0px;width:300px;text-align:center;">April</div>
<div class="t n" style="top:87px;height:18px;line-height:18px;right:221px;">1-Apr-27</div>
<div class="t n" style="top:105px;height:18px;line-height:18px;right:221px;">30-Apr-27</div>
<div class="t n" style="top:123px;height:18px;line-height:18px;right:226px;">16</div>
<div class="t n" style="top:141px;height:18px;line-height:18px;right:221px;">2027</div>
<div class="t n" style="top:159px;height:18px;line-height:18px;right:226px;">30</div>
<div class="t blue" style="top:69px;height:18px;line-height:18px;left:1434.0px;width:300px;text-align:center;">May</div>
<div class="t n" style="top:87px;height:18px;line-height:18px;right:150px;">1-May-27</div>
<div class="t n" style="top:105px;height:18px;line-height:18px;right:150px;">31-May-27</div>
<div class="t n" style="top:123px;height:18px;line-height:18px;right:155px;">17</div>
<div class="t n" style="top:141px;height:18px;line-height:18px;right:150px;">2027</div>
<div class="t n" style="top:159px;height:18px;line-height:18px;right:155px;">31</div>
<div class="t blue" style="top:69px;height:18px;line-height:18px;left:1505.0px;width:300px;text-align:center;">June</div>
<div class="t n" style="top:87px;height:18px;line-height:18px;right:79px;">1-Jun-27</div>
<div class="t n" style="top:105px;height:18px;line-height:18px;right:79px;">30-Jun-27</div>
<div class="t n" style="top:123px;height:18px;line-height:18px;right:84px;">18</div>
<div class="t n" style="top:141px;height:18px;line-height:18px;right:79px;">2027</div>
<div class="t n" style="top:159px;height:18px;line-height:18px;right:84px;">30</div>
<div class="t blue" style="top:69px;height:18px;line-height:18px;left:1576.0px;width:300px;text-align:center;">July</div>
<div class="t n" style="top:87px;height:18px;line-height:18px;right:8px;">1-Jul-27</div>
<div class="t n" style="top:105px;height:18px;line-height:18px;right:8px;">31-Jul-27</div>
<div class="t n" style="top:123px;height:18px;line-height:18px;right:13px;">19</div>
<div class="t n" style="top:141px;height:18px;line-height:18px;right:8px;">2027</div>
<div class="t n" style="top:159px;height:18px;line-height:18px;right:13px;">31</div>
<div class="t " style="top:177px;height:18px;line-height:18px;left:366px;letter-spacing:-0.405px;">Divide the % of cost to each mean, so the development process can be forecast accurately. (in yellow colored cell only)</div>
<div class="t " style="top:213px;height:18px;line-height:18px;left:38px;letter-spacing:-0.559px;">Land Purchased Month</div>
<div class="t inp n" style="top:213px;height:18px;line-height:18px;right:1423px;">Mar-26</div>
<div class="t " style="top:231px;height:18px;line-height:18px;left:38px;letter-spacing:-0.536px;">Land Price</div>
<div class="t inp n" style="top:231px;height:18px;line-height:18px;right:1427.5px;">15,000,000</div>
<div class="t b" style="top:267px;height:18px;line-height:18px;left:38px;letter-spacing:-0.331px;">Admin &amp; Legal Fees</div>
<div class="t " style="top:285px;height:18px;line-height:18px;left:38px;letter-spacing:-0.502px;">Stamp Duty</div>
<div class="t inp n p" style="top:285px;height:18px;line-height:18px;right:1424px;">5%</div>
<div class="t " style="top:303px;height:18px;line-height:18px;left:38px;letter-spacing:-0.393px;">Land Acquisition additional cost</div>
<div class="t inp n p" style="top:303px;height:18px;line-height:18px;right:1424px;">5%</div>
<div class="t " style="top:321px;height:18px;line-height:18px;left:38px;letter-spacing:-0.496px;">Brokerage &amp; land acquistion fees</div>
<div class="t inp n p" style="top:321px;height:18px;line-height:18px;right:1424px;">5%</div>
<div class="t " style="top:339px;height:18px;line-height:18px;left:38px;letter-spacing:-0.513px;">Notary &amp; legal fees</div>
<div class="t inp n p" style="top:339px;height:18px;line-height:18px;right:1424px;">5%</div>
<div class="t " style="top:357px;height:18px;line-height:18px;left:38px;letter-spacing:-0.6px;">Others</div>
<div class="t inp n p" style="top:357px;height:18px;line-height:18px;right:1424px;">5%</div>
<div class="t " style="top:375px;height:18px;line-height:18px;left:38px;letter-spacing:-0.6px;">Others</div>
<div class="t inp n p" style="top:375px;height:18px;line-height:18px;right:1424px;">5%</div>
<div class="t b" style="top:393px;height:18px;line-height:18px;left:38px;letter-spacing:-0.376px;">Total Land Acquisition</div>
<div class="t b" style="top:429px;height:18px;line-height:18px;left:38px;letter-spacing:-0.438px;">Development Cost - Hard:</div>
<div class="t b" style="top:429px;height:18px;line-height:18px;right:1423px;">Amount</div>
<div class="t " style="top:429px;height:18px;line-height:18px;left:366px;">Amount Spending by Months</div>
<div class="t" style="left:38px;width:209px;overflow:hidden;top:447px;height:18px;line-height:18px;letter-spacing:-0.395px;">Site Work &amp; Earthwork</div>
<div class="t inp n" style="top:447px;height:18px;line-height:18px;right:1427.5px;">500,000</div>
<div class="t inp n p" style="top:447px;height:18px;line-height:18px;right:1307px;">10%</div>
<div class="t inp n p" style="top:447px;height:18px;line-height:18px;right:1235px;">10%</div>
<div class="t inp n p" style="top:447px;height:18px;line-height:18px;right:1146px;">10%</div>
<div class="t inp n p" style="top:447px;height:18px;line-height:18px;right:1074px;">10%</div>
<div class="t inp n p" style="top:447px;height:18px;line-height:18px;right:1003px;">10%</div>
<div class="t inp n p" style="top:447px;height:18px;line-height:18px;right:932px;">5%</div>
<div class="t inp n p" style="top:447px;height:18px;line-height:18px;right:861px;">5%</div>
<div class="t inp n p" style="top:447px;height:18px;line-height:18px;right:790px;">5%</div>
<div class="t inp n p" style="top:447px;height:18px;line-height:18px;right:719px;">10%</div>
<div class="t inp n p" style="top:447px;height:18px;line-height:18px;right:648px;">10%</div>
<div class="t inp n p" style="top:447px;height:18px;line-height:18px;right:577px;">10%</div>
<div class="t" style="left:38px;width:209px;overflow:hidden;top:465px;height:18px;line-height:18px;letter-spacing:-0.613px;">Foundation</div>
<div class="t inp n" style="top:465px;height:18px;line-height:18px;right:1427.5px;">500,000</div>
<div class="t inp n p" style="top:465px;height:18px;line-height:18px;right:1235px;">10%</div>
<div class="t inp n p" style="top:465px;height:18px;line-height:18px;right:1146px;">10%</div>
<div class="t inp n p" style="top:465px;height:18px;line-height:18px;right:1074px;">10%</div>
<div class="t inp n p" style="top:465px;height:18px;line-height:18px;right:1003px;">10%</div>
<div class="t inp n p" style="top:465px;height:18px;line-height:18px;right:932px;">10%</div>
<div class="t inp n p" style="top:465px;height:18px;line-height:18px;right:861px;">10%</div>
<div class="t inp n p" style="top:465px;height:18px;line-height:18px;right:790px;">10%</div>
<div class="t inp n p" style="top:465px;height:18px;line-height:18px;right:719px;">10%</div>
<div class="t inp n p" style="top:465px;height:18px;line-height:18px;right:648px;">10%</div>
<div class="t inp n p" style="top:465px;height:18px;line-height:18px;right:577px;">10%</div>
<div class="t inp n p" style="top:465px;height:18px;line-height:18px;right:506px;">10%</div>
<div class="t" style="left:38px;width:209px;overflow:hidden;top:483px;height:18px;line-height:18px;letter-spacing:-0.501px;">Core Building &amp; Structure</div>
<div class="t inp n" style="top:483px;height:18px;line-height:18px;right:1427.5px;">500,000</div>
<div class="t inp n p" style="top:483px;height:18px;line-height:18px;right:1146px;">10%</div>
<div class="t inp n p" style="top:483px;height:18px;line-height:18px;right:1074px;">10%</div>
<div class="t inp n p" style="top:483px;height:18px;line-height:18px;right:1003px;">10%</div>
<div class="t inp n p" style="top:483px;height:18px;line-height:18px;right:932px;">10%</div>
<div class="t inp n p" style="top:483px;height:18px;line-height:18px;right:861px;">10%</div>
<div class="t inp n p" style="top:483px;height:18px;line-height:18px;right:790px;">10%</div>
<div class="t inp n p" style="top:483px;height:18px;line-height:18px;right:719px;">10%</div>
<div class="t inp n p" style="top:483px;height:18px;line-height:18px;right:648px;">10%</div>
<div class="t inp n p" style="top:483px;height:18px;line-height:18px;right:577px;">10%</div>
<div class="t inp n p" style="top:483px;height:18px;line-height:18px;right:506px;">10%</div>
<div class="t inp n p" style="top:483px;height:18px;line-height:18px;right:435px;">10%</div>
<div class="t" style="left:38px;width:209px;overflow:hidden;top:501px;height:18px;line-height:18px;letter-spacing:-0.342px;">Building Finish &amp; Systems</div>
<div class="t inp n" style="top:501px;height:18px;line-height:18px;right:1427.5px;">500,000</div>
<div class="t inp n p" style="top:501px;height:18px;line-height:18px;right:1074px;">10%</div>
<div class="t inp n p" style="top:501px;height:18px;line-height:18px;right:1003px;">10%</div>
<div class="t inp n p" style="top:501px;height:18px;line-height:18px;right:932px;">10%</div>
<div class="t inp n p" style="top:501px;height:18px;line-height:18px;right:861px;">10%</div>
<div class="t inp n p" style="top:501px;height:18px;line-height:18px;right:790px;">10%</div>
<div class="t inp n p" style="top:501px;height:18px;line-height:18px;right:719px;">10%</div>
<div class="t inp n p" style="top:501px;height:18px;line-height:18px;right:648px;">10%</div>
<div class="t inp n p" style="top:501px;height:18px;line-height:18px;right:577px;">10%</div>
<div class="t inp n p" style="top:501px;height:18px;line-height:18px;right:506px;">10%</div>
<div class="t inp n p" style="top:501px;height:18px;line-height:18px;right:435px;">10%</div>
<div class="t inp n p" style="top:501px;height:18px;line-height:18px;right:364px;">10%</div>
<div class="t" style="left:38px;width:209px;overflow:hidden;top:519px;height:18px;line-height:18px;letter-spacing:-0.62px;">Hard Cost 5</div>
<div class="t inp n" style="top:519px;height:18px;line-height:18px;right:1427.5px;">500,000</div>
<div class="t inp n p" style="top:519px;height:18px;line-height:18px;right:1003px;">10%</div>
<div class="t inp n p" style="top:519px;height:18px;line-height:18px;right:932px;">10%</div>
<div class="t inp n p" style="top:519px;height:18px;line-height:18px;right:861px;">10%</div>
<div class="t inp n p" style="top:519px;height:18px;line-height:18px;right:790px;">10%</div>
<div class="t inp n p" style="top:519px;height:18px;line-height:18px;right:719px;">10%</div>
<div class="t inp n p" style="top:519px;height:18px;line-height:18px;right:648px;">10%</div>
<div class="t inp n p" style="top:519px;height:18px;line-height:18px;right:577px;">10%</div>
<div class="t inp n p" style="top:519px;height:18px;line-height:18px;right:506px;">10%</div>
<div class="t inp n p" style="top:519px;height:18px;line-height:18px;right:435px;">10%</div>
<div class="t inp n p" style="top:519px;height:18px;line-height:18px;right:364px;">10%</div>
<div class="t inp n p" style="top:519px;height:18px;line-height:18px;right:293px;">10%</div>
<div class="t inp n p" style="top:519px;height:18px;line-height:18px;right:222px;">10%</div>
<div class="t inp n p" style="top:519px;height:18px;line-height:18px;right:151px;">10%</div>
<div class="t" style="left:38px;width:209px;overflow:hidden;top:537px;height:18px;line-height:18px;letter-spacing:-0.62px;">Hard Cost 6</div>
<div class="t inp n" style="top:537px;height:18px;line-height:18px;right:1427.5px;">500,000</div>
<div class="t inp n p" style="top:537px;height:18px;line-height:18px;right:932px;">10%</div>
<div class="t inp n p" style="top:537px;height:18px;line-height:18px;right:861px;">10%</div>
<div class="t inp n p" style="top:537px;height:18px;line-height:18px;right:790px;">10%</div>
<div class="t inp n p" style="top:537px;height:18px;line-height:18px;right:719px;">10%</div>
<div class="t inp n p" style="top:537px;height:18px;line-height:18px;right:648px;">10%</div>
<div class="t inp n p" style="top:537px;height:18px;line-height:18px;right:577px;">10%</div>
<div class="t inp n p" style="top:537px;height:18px;line-height:18px;right:506px;">10%</div>
<div class="t inp n p" style="top:537px;height:18px;line-height:18px;right:435px;">10%</div>
<div class="t inp n p" style="top:537px;height:18px;line-height:18px;right:364px;">10%</div>
<div class="t inp n p" style="top:537px;height:18px;line-height:18px;right:293px;">10%</div>
<div class="t inp n p" style="top:537px;height:18px;line-height:18px;right:222px;">10%</div>
<div class="t inp n p" style="top:537px;height:18px;line-height:18px;right:151px;">10%</div>
<div class="t inp n p" style="top:537px;height:18px;line-height:18px;right:80px;">10%</div>
<div class="t b" style="top:555px;height:18px;line-height:18px;left:38px;letter-spacing:-0.39px;">Total Development Hard Cost</div>
<div class="t b" style="top:555px;height:18px;line-height:18px;right:1427.5px;letter-spacing:-0.66px;">3,000,000</div>
<div class="t b" style="top:591px;height:18px;line-height:18px;left:38px;letter-spacing:-0.455px;">Development Cost - Soft:</div>
<div class="t b" style="top:591px;height:18px;line-height:18px;right:1427.5px;">Amount</div>
<div class="t " style="top:591px;height:18px;line-height:18px;left:366px;">Amount Spending by Months</div>
<div class="t" style="left:38px;width:209px;overflow:hidden;top:609px;height:18px;line-height:18px;letter-spacing:-0.544px;">Design &amp; Engnineering Fees</div>
<div class="t inp n" style="top:609px;height:18px;line-height:18px;right:1427.5px;">10,000</div>
<div class="t inp n p" style="top:609px;height:18px;line-height:18px;right:1307px;">10%</div>
<div class="t inp n p" style="top:609px;height:18px;line-height:18px;right:1235px;">10%</div>
<div class="t inp n p" style="top:609px;height:18px;line-height:18px;right:1146px;">10%</div>
<div class="t inp n p" style="top:609px;height:18px;line-height:18px;right:1074px;">10%</div>
<div class="t inp n p" style="top:609px;height:18px;line-height:18px;right:1003px;">10%</div>
<div class="t inp n p" style="top:609px;height:18px;line-height:18px;right:932px;">5%</div>
<div class="t inp n p" style="top:609px;height:18px;line-height:18px;right:861px;">5%</div>
<div class="t inp n p" style="top:609px;height:18px;line-height:18px;right:790px;">5%</div>
<div class="t inp n p" style="top:609px;height:18px;line-height:18px;right:719px;">10%</div>
<div class="t inp n p" style="top:609px;height:18px;line-height:18px;right:648px;">10%</div>
<div class="t inp n p" style="top:609px;height:18px;line-height:18px;right:577px;">10%</div>
<div class="t" style="left:38px;width:209px;overflow:hidden;top:627px;height:18px;line-height:18px;letter-spacing:-0.466px;">Permits, Taxes, &amp; Development</div>
<div class="t inp n" style="top:627px;height:18px;line-height:18px;right:1427.5px;">10,000</div>
<div class="t inp n p" style="top:627px;height:18px;line-height:18px;right:1235px;">10%</div>
<div class="t inp n p" style="top:627px;height:18px;line-height:18px;right:1146px;">10%</div>
<div class="t inp n p" style="top:627px;height:18px;line-height:18px;right:1074px;">10%</div>
<div class="t inp n p" style="top:627px;height:18px;line-height:18px;right:1003px;">10%</div>
<div class="t inp n p" style="top:627px;height:18px;line-height:18px;right:932px;">10%</div>
<div class="t inp n p" style="top:627px;height:18px;line-height:18px;right:861px;">10%</div>
<div class="t inp n p" style="top:627px;height:18px;line-height:18px;right:790px;">10%</div>
<div class="t inp n p" style="top:627px;height:18px;line-height:18px;right:719px;">10%</div>
<div class="t inp n p" style="top:627px;height:18px;line-height:18px;right:648px;">10%</div>
<div class="t inp n p" style="top:627px;height:18px;line-height:18px;right:577px;">10%</div>
<div class="t inp n p" style="top:627px;height:18px;line-height:18px;right:506px;">10%</div>
<div class="t" style="left:38px;width:209px;overflow:hidden;top:645px;height:18px;line-height:18px;">Project Management &amp; Legal/Admin</div>
<div class="t inp n" style="top:645px;height:18px;line-height:18px;right:1427.5px;">10,000</div>
<div class="t inp n p" style="top:645px;height:18px;line-height:18px;right:1146px;">10%</div>
<div class="t inp n p" style="top:645px;height:18px;line-height:18px;right:1074px;">10%</div>
<div class="t inp n p" style="top:645px;height:18px;line-height:18px;right:1003px;">10%</div>
<div class="t inp n p" style="top:645px;height:18px;line-height:18px;right:932px;">10%</div>
<div class="t inp n p" style="top:645px;height:18px;line-height:18px;right:861px;">10%</div>
<div class="t inp n p" style="top:645px;height:18px;line-height:18px;right:790px;">10%</div>
<div class="t inp n p" style="top:645px;height:18px;line-height:18px;right:719px;">10%</div>
<div class="t inp n p" style="top:645px;height:18px;line-height:18px;right:648px;">10%</div>
<div class="t inp n p" style="top:645px;height:18px;line-height:18px;right:577px;">10%</div>
<div class="t inp n p" style="top:645px;height:18px;line-height:18px;right:506px;">10%</div>
<div class="t inp n p" style="top:645px;height:18px;line-height:18px;right:435px;">10%</div>
<div class="t" style="left:38px;width:209px;overflow:hidden;top:663px;height:18px;line-height:18px;letter-spacing:-0.555px;">Pre-opening Operational Setup</div>
<div class="t inp n" style="top:663px;height:18px;line-height:18px;right:1427.5px;">10,000</div>
<div class="t inp n p" style="top:663px;height:18px;line-height:18px;right:1074px;">10%</div>
<div class="t inp n p" style="top:663px;height:18px;line-height:18px;right:1003px;">10%</div>
<div class="t inp n p" style="top:663px;height:18px;line-height:18px;right:932px;">10%</div>
<div class="t inp n p" style="top:663px;height:18px;line-height:18px;right:861px;">10%</div>
<div class="t inp n p" style="top:663px;height:18px;line-height:18px;right:790px;">10%</div>
<div class="t inp n p" style="top:663px;height:18px;line-height:18px;right:719px;">10%</div>
<div class="t inp n p" style="top:663px;height:18px;line-height:18px;right:648px;">10%</div>
<div class="t inp n p" style="top:663px;height:18px;line-height:18px;right:577px;">10%</div>
<div class="t inp n p" style="top:663px;height:18px;line-height:18px;right:506px;">10%</div>
<div class="t inp n p" style="top:663px;height:18px;line-height:18px;right:435px;">10%</div>
<div class="t inp n p" style="top:663px;height:18px;line-height:18px;right:364px;">10%</div>
<div class="t" style="left:38px;width:209px;overflow:hidden;top:681px;height:18px;line-height:18px;letter-spacing:-0.59px;">Pre-Opening Marketing</div>
<div class="t inp n" style="top:681px;height:18px;line-height:18px;right:1427.5px;">10,000</div>
<div class="t inp n p" style="top:681px;height:18px;line-height:18px;right:1003px;">10%</div>
<div class="t inp n p" style="top:681px;height:18px;line-height:18px;right:932px;">10%</div>
<div class="t inp n p" style="top:681px;height:18px;line-height:18px;right:861px;">10%</div>
<div class="t inp n p" style="top:681px;height:18px;line-height:18px;right:790px;">10%</div>
<div class="t inp n p" style="top:681px;height:18px;line-height:18px;right:719px;">10%</div>
<div class="t inp n p" style="top:681px;height:18px;line-height:18px;right:648px;">10%</div>
<div class="t inp n p" style="top:681px;height:18px;line-height:18px;right:577px;">10%</div>
<div class="t inp n p" style="top:681px;height:18px;line-height:18px;right:506px;">10%</div>
<div class="t inp n p" style="top:681px;height:18px;line-height:18px;right:435px;">10%</div>
<div class="t inp n p" style="top:681px;height:18px;line-height:18px;right:364px;">10%</div>
<div class="t inp n p" style="top:681px;height:18px;line-height:18px;right:293px;">10%</div>
<div class="t" style="left:38px;width:209px;overflow:hidden;top:699px;height:18px;line-height:18px;letter-spacing:-0.405px;">Insurance &amp; Utilities</div>
<div class="t inp n" style="top:699px;height:18px;line-height:18px;right:1427.5px;">10,000</div>
<div class="t inp n p" style="top:699px;height:18px;line-height:18px;right:932px;">10%</div>
<div class="t inp n p" style="top:699px;height:18px;line-height:18px;right:861px;">10%</div>
<div class="t inp n p" style="top:699px;height:18px;line-height:18px;right:790px;">10%</div>
<div class="t inp n p" style="top:699px;height:18px;line-height:18px;right:719px;">10%</div>
<div class="t inp n p" style="top:699px;height:18px;line-height:18px;right:648px;">10%</div>
<div class="t inp n p" style="top:699px;height:18px;line-height:18px;right:577px;">10%</div>
<div class="t inp n p" style="top:699px;height:18px;line-height:18px;right:506px;">10%</div>
<div class="t inp n p" style="top:699px;height:18px;line-height:18px;right:435px;">10%</div>
<div class="t inp n p" style="top:699px;height:18px;line-height:18px;right:364px;">10%</div>
<div class="t inp n p" style="top:699px;height:18px;line-height:18px;right:293px;">10%</div>
<div class="t b" style="top:717px;height:18px;line-height:18px;left:38px;letter-spacing:-0.39px;">Total Development Soft Cost</div>
<div class="t b" style="top:717px;height:18px;line-height:18px;right:1427.5px;letter-spacing:-0.66px;">60,000</div>
<div class="t b" style="top:753px;height:18px;line-height:18px;left:38px;letter-spacing:-0.59px;">Contingency Cost:</div>
<div class="t b" style="top:753px;height:18px;line-height:18px;right:1427.5px;">Amount</div>
<div class="t " style="top:753px;height:18px;line-height:18px;left:366px;">Amount Spending by Months</div>
<div class="t" style="left:38px;width:209px;overflow:hidden;top:771px;height:18px;line-height:18px;letter-spacing:-0.444px;">Cont. Cost 1</div>
<div class="t" style="left:38px;width:209px;overflow:hidden;top:789px;height:18px;line-height:18px;letter-spacing:-0.444px;">Cont. Cost 2</div>
<div class="t inp n" style="top:789px;height:18px;line-height:18px;right:1427.5px;">10,000</div>
<div class="t b" style="top:807px;height:18px;line-height:18px;left:38px;letter-spacing:-0.466px;">Total Contingency Cost</div>
<div class="t b" style="top:807px;height:18px;line-height:18px;right:1427.5px;letter-spacing:-0.66px;">6,130,000</div>
<div class="t b" style="left:38px;width:209px;overflow:hidden;top:843px;height:18px;line-height:18px;">Furniture &amp; Fixture &amp; Equipments</div>
<div class="t b" style="top:843px;height:18px;line-height:18px;right:1423px;">Amount</div>
<div class="t " style="top:843px;height:18px;line-height:18px;left:366px;">Amount Spending by Months</div>
<div style="position:absolute;left:0px;top:857px;width:1767px;height:24px;background:#f6f6f6;"></div>
<div style="position:absolute;left:0px;top:857px;width:1767px;height:1px;background:#ababab;"></div>
<div style="position:absolute;left:223px;top:857px;width:166px;height:24px;background:#fff;"></div>
<div style="position:absolute;left:223px;top:857px;width:1px;height:24px;background:#ababab;"></div>
<div style="position:absolute;left:388px;top:857px;width:1px;height:24px;background:#ababab;"></div>
<div style="position:absolute;left:100px;top:861px;width:1px;height:20px;background:#ababab;"></div>
<div style="position:absolute;left:160px;top:861px;width:1px;height:20px;background:#ababab;"></div>
<div style="position:absolute;left:505px;top:861px;width:1px;height:20px;background:#ababab;"></div>
<div style="position:absolute;left:606px;top:861px;width:1px;height:20px;background:#ababab;"></div>
<div style="position:absolute;left:706px;top:861px;width:1px;height:20px;background:#ababab;"></div>
<div style="position:absolute;left:817px;top:861px;width:1px;height:20px;background:#ababab;"></div>
<div style="position:absolute;left:1007px;top:861px;width:1px;height:20px;background:#ababab;"></div>
<div style="position:absolute;left:1253px;top:861px;width:1px;height:20px;background:#ababab;"></div>
<svg style="position:absolute;left:0;top:857px" width="100" height="24"><polygon points="30.5,10 30.5,19.5 24.5,14.7" fill="#c6c6c6"/><polygon points="53.5,9.5 53.5,19.5 59.5,14.5" fill="#217346"/></svg>
<div class="t" style="left:114.1px;top:858px;height:22px;line-height:22px;font-size:16px;letter-spacing:0.690px;color:#444;">Title</div>
<div class="t" style="left:173.0px;top:858px;height:22px;line-height:22px;font-size:16px;letter-spacing:1.371px;color:#444;">Intro</div>
<div class="t" style="left:234.7px;top:858px;height:22px;line-height:22px;font-size:16px;letter-spacing:0.257px;color:#217346;font-weight:bold;">Construction Plan</div>
<div class="t" style="left:402.0px;top:858px;height:22px;line-height:22px;font-size:16px;letter-spacing:0.776px;color:#444;">Input Sheet</div>
<div class="t" style="left:518.1px;top:858px;height:22px;line-height:22px;font-size:16px;letter-spacing:0.858px;color:#444;">Summary</div>
<div class="t" style="left:618.2px;top:858px;height:22px;line-height:22px;font-size:16px;letter-spacing:1.084px;color:#444;">Valuation</div>
<div class="t" style="left:719.8px;top:858px;height:22px;line-height:22px;font-size:16px;letter-spacing:0.627px;color:#444;">Dashboard</div>
<div class="t" style="left:832.6px;top:858px;height:22px;line-height:22px;font-size:16px;letter-spacing:0.452px;color:#444;">Financial Statements</div>
<div class="t" style="left:1023.8px;top:858px;height:22px;line-height:22px;font-size:16px;letter-spacing:0.394px;color:#444;">Revenue Forecast (Monthly)</div>
<div class="t" style="left:1271px;top:858px;width:25.5px;overflow:hidden;height:22px;line-height:22px;font-size:16px;color:#444;letter-spacing:0.3px;">Inco</div>
<div class="t" style="left:1304px;top:859px;height:22px;line-height:22px;font-size:16px;color:#1e6b3c;font-weight:normal;letter-spacing:-0.1px;-webkit-text-stroke:0.45px #1e6b3c;">...</div>
<svg style="position:absolute;left:1325px;top:857px" width="60" height="24"><circle cx="15" cy="15" r="9.2" fill="none" stroke="#6b6b6b" stroke-width="1.3"/><path d="M10 15H20M15 10V20" stroke="#6b6b6b" stroke-width="1.5" fill="none"/><rect x="43" y="10" width="2" height="2" fill="#bdbdbd"/><rect x="43" y="14" width="2" height="2" fill="#bdbdbd"/><rect x="43" y="18" width="2" height="2" fill="#bdbdbd"/></svg>
<div style="position:absolute;left:1386px;top:862px;width:381px;height:19px;background:#e8e8e8;"></div>
<div style="position:absolute;left:1386px;top:862px;width:103px;height:19px;background:#fff;box-sizing:border-box;border:1px solid #ababab;border-bottom:none;"></div>
<div style="position:absolute;left:1404px;top:863px;width:2px;height:18px;background:#c0c0c0;"></div>
<svg style="position:absolute;left:1386px;top:862px" width="19" height="19"><polygon points="11,5 11,14.5 6.3,9.8" fill="#777"/></svg>
</body></html>
